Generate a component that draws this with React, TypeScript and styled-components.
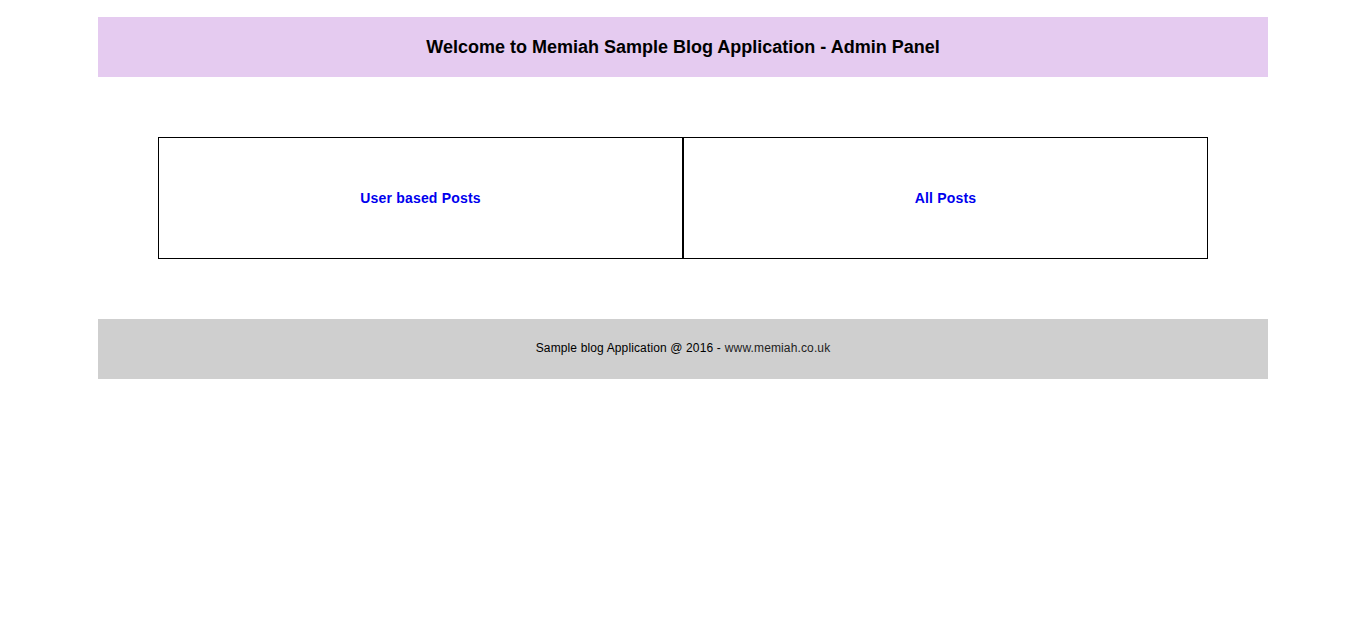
import { FC, ReactElement } from "react";
import styled, { createGlobalStyle } from "styled-components";

const GlobalStyle = createGlobalStyle`
    body {
        margin: 0;
        background: #fff;
        font-family: "Liberation Sans", Arial, sans-serif;
    }
`;

const Page = styled.div`
    width: 1170px;
    margin: 17px 0 0 98px;
`;

const Header = styled.header`
    height: 60px;
    background: #e5cbf0;
    display: flex;
    align-items: center;
    justify-content: center;
    h1 {
        margin: 0;
        font-size: 18px;
        font-weight: bold;
        color: #000;
    }
`;

const Panels = styled.main`
    margin: 60px 60px;
    display: flex;
`;

const Panel = styled.a`
    flex: 1;
    height: 120px;
    border: 1px solid #000;
    display: flex;
    align-items: center;
    justify-content: center;
    font-size: 14px;
    font-weight: bold;
    letter-spacing: 0.2px;
    color: #0000ee;
    text-decoration: none;
`;

const Footer = styled.footer`
    height: 60px;
    box-sizing: border-box;
    padding-bottom: 3px;
    background: #cfcfcf;
    display: flex;
    align-items: center;
    justify-content: center;
    font-size: 12px;
    letter-spacing: 0.13px;
    color: #000;
    a {
        color: #222;
        text-decoration: none;
        margin-left: 4px;
    }
`;

const App: FC = (): ReactElement => {
    return (
        <>
            <GlobalStyle />
            <Page>
                <Header>
                    <h1>Welcome to Memiah Sample Blog Application - Admin Panel</h1>
                </Header>
                <Panels>
                    <Panel href="#">User based Posts</Panel>
                    <Panel href="#">All Posts</Panel>
                </Panels>
                <Footer>
                    Sample blog Application @ 2016 -<a href="#">www.memiah.co.uk</a>
                </Footer>
            </Page>
        </>
    );
};

export default App;
